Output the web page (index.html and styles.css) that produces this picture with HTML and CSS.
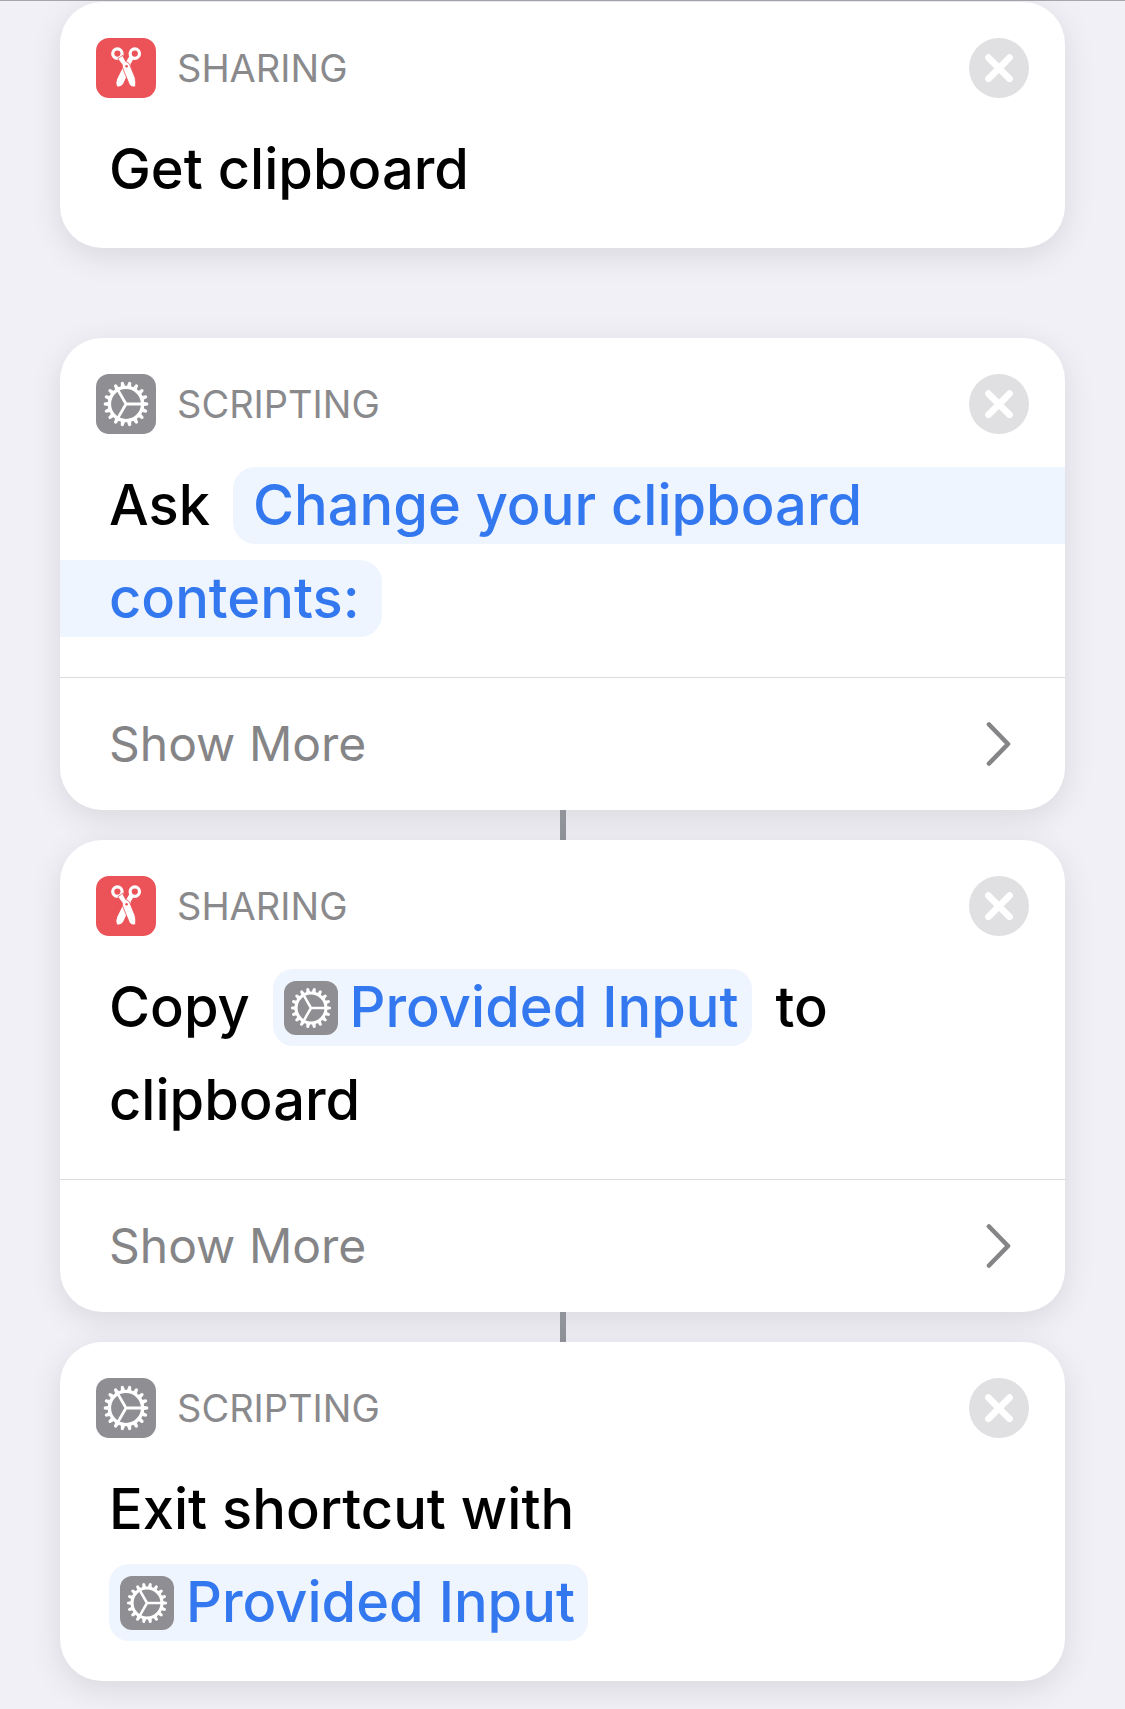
FILE: index.html
```html
<!DOCTYPE html>
<html lang="en">
<head>
<meta charset="utf-8">
<meta name="viewport" content="width=device-width, initial-scale=1">
<title>Shortcut editor</title>
<link rel="stylesheet" href="styles.css">
</head>
<body>
<svg class="sprite" width="0" height="0" aria-hidden="true">
  <symbol id="scissors" viewBox="0 0 60 60">
    <g fill="none" stroke="#fff" stroke-width="3.2">
      <circle cx="21.4" cy="15.6" r="4.7"/>
      <circle cx="38.8" cy="15.6" r="4.7"/>
    </g>
    <path fill="#fff" d="M33.6 17.8 L37.6 20.8 L34.8 25.6 L32.6 34 L27 46 Q24.8 49.2 21 48.2 Q19.6 45 21.2 41 L28.4 26.5z"/>
    <path fill="#fff" stroke="#eb5358" stroke-width=".8" d="M21.8 20.8 L26.6 17.4 L29.8 23.6 Q32.8 24.2 33.9 27 L39 39.6 Q40.2 44 39.5 48.6 Q35.4 49.8 33.4 46.6 L27 31 Q26.2 28.6 26.4 27z"/>
    <circle cx="30.6" cy="28.2" r="1.3" fill="#eb5358"/>
  </symbol>
  <symbol id="gear" viewBox="0 0 60 60">
    <defs><path id="tooth" d="M46.5 27.7 L51.6 28.5 Q53.4 30 51.6 31.5 L46.5 32.3z"/></defs>
    <g fill="#fff">
      <use href="#tooth"/>
      <use href="#tooth" transform="rotate(20 30 30)"/>
      <use href="#tooth" transform="rotate(40 30 30)"/>
      <use href="#tooth" transform="rotate(60 30 30)"/>
      <use href="#tooth" transform="rotate(80 30 30)"/>
      <use href="#tooth" transform="rotate(100 30 30)"/>
      <use href="#tooth" transform="rotate(120 30 30)"/>
      <use href="#tooth" transform="rotate(140 30 30)"/>
      <use href="#tooth" transform="rotate(160 30 30)"/>
      <use href="#tooth" transform="rotate(180 30 30)"/>
      <use href="#tooth" transform="rotate(200 30 30)"/>
      <use href="#tooth" transform="rotate(220 30 30)"/>
      <use href="#tooth" transform="rotate(240 30 30)"/>
      <use href="#tooth" transform="rotate(260 30 30)"/>
      <use href="#tooth" transform="rotate(280 30 30)"/>
      <use href="#tooth" transform="rotate(300 30 30)"/>
      <use href="#tooth" transform="rotate(320 30 30)"/>
      <use href="#tooth" transform="rotate(340 30 30)"/>
    </g>
    <g fill="none" stroke="#fff">
      <circle cx="30" cy="30" r="16.6" stroke-width="3.4"/>
      <path stroke-width="2.8" d="M30 30 H46 M30 30 L22 16.1 M30 30 L22 43.9"/>
    </g>
  </symbol>
  <symbol id="cross" viewBox="0 0 60 60">
    <path fill="none" stroke="#fff" stroke-width="6.6" stroke-linecap="round" d="M19.4 19.6 L40.6 40.8 M40.6 19.6 L19.4 40.8"/>
  </symbol>
  <symbol id="chevron" viewBox="0 0 26 46">
    <path fill="none" stroke="#858587" stroke-width="4.6" stroke-linecap="round" stroke-linejoin="round" d="M3 3.5 L22 23 L3 42.5"/>
  </symbol>
</svg>

<main class="editor">
  <section class="card card-detached">
    <header class="card-header">
      <svg class="app-icon sharing" aria-hidden="true"><use href="#scissors"/></svg>
      <span class="category">SHARING</span>
      <button class="close" type="button" aria-label="Remove action"><svg aria-hidden="true"><use href="#cross"/></svg></button>
    </header>
    <h2 class="action">Get clipboard</h2>
  </section>

  <section class="card">
    <header class="card-header">
      <svg class="app-icon scripting" aria-hidden="true"><use href="#gear"/></svg>
      <span class="category">SCRIPTING</span>
      <button class="close" type="button" aria-label="Remove action"><svg aria-hidden="true"><use href="#cross"/></svg></button>
    </header>
    <h2 class="action action-lines">Ask <a class="prompt" href="#prompt"><span class="prompt-start">Change your clipboard</span> <span class="prompt-end">contents:</span></a></h2>
    <button class="more" type="button">Show More <svg class="chevron" aria-hidden="true"><use href="#chevron"/></svg></button>
  </section>
  <div class="connector"></div>

  <section class="card">
    <header class="card-header">
      <svg class="app-icon sharing" aria-hidden="true"><use href="#scissors"/></svg>
      <span class="category">SHARING</span>
      <button class="close" type="button" aria-label="Remove action"><svg aria-hidden="true"><use href="#cross"/></svg></button>
    </header>
    <h2 class="action">Copy <a class="variable inset" href="#input"><svg class="chip-icon scripting" aria-hidden="true"><use href="#gear"/></svg><span class="variable-name">Provided Input</span></a> to clipboard</h2>
    <button class="more" type="button">Show More <svg class="chevron" aria-hidden="true"><use href="#chevron"/></svg></button>
  </section>
  <div class="connector"></div>

  <section class="card">
    <header class="card-header">
      <svg class="app-icon scripting" aria-hidden="true"><use href="#gear"/></svg>
      <span class="category">SCRIPTING</span>
      <button class="close" type="button" aria-label="Remove action"><svg aria-hidden="true"><use href="#cross"/></svg></button>
    </header>
    <h2 class="action">Exit shortcut with <a class="variable" href="#input"><svg class="chip-icon scripting" aria-hidden="true"><use href="#gear"/></svg><span class="variable-name">Provided Input</span></a></h2>
  </section>
</main>
</body>
</html>
```
FILE: styles.css
```css
* {
  box-sizing: border-box;
}

body {
  margin: 0;
  background: #f1f0f6;
  font-family: Inter, "Liberation Sans", sans-serif;
}

.sprite {
  display: block;
}

.editor {
  border-top: 1px solid #a7a6ac;
  padding: 1px 60px 27px;
}

.card {
  background: #fff;
  border-radius: 42px;
  box-shadow: 0 8px 32px rgba(0, 0, 0, 0.1);
  overflow: hidden;
}

.card-detached {
  margin-bottom: 90px;
}

.card-header {
  display: flex;
  align-items: center;
  gap: 21px;
  padding: 36px 36px 25px;
}

.app-icon {
  width: 60px;
  height: 60px;
  border-radius: 13px;
}

.sharing {
  background: #eb5358;
}

.scripting {
  background: #8e8e93;
}

.category {
  flex: 1;
  color: #8a8a8d;
  font-size: 38px;
  line-height: 60px;
}

.close {
  width: 60px;
  height: 60px;
  padding: 0;
  border: 0;
  border-radius: 50%;
  background: #e0e0e2;
}

.close svg {
  display: block;
  width: 60px;
  height: 60px;
}

.action {
  margin: 0;
  padding: 0 49px 32px;
  color: #000;
  font-size: 56px;
  font-weight: 500;
  line-height: 93px;
}

.action a {
  color: #3478f0;
  text-decoration: none;
}

/* The prompt runs off the right edge and continues from the left one. */
.action-lines {
  display: flex;
  flex-wrap: wrap;
  align-items: center;
  column-gap: 23px;
}

.prompt {
  display: contents;
}

.prompt-start,
.prompt-end {
  margin: 8px 0;
  background: #eff5fe;
  line-height: 77px;
}

.prompt-start {
  flex: 1;
  margin-right: -49px;
  padding-left: 20px;
  border-radius: 22px 0 0 22px;
  white-space: nowrap;
}

.prompt-end {
  margin-left: -49px;
  padding: 0 22px 0 49px;
  border-radius: 0 22px 22px 0;
}

.variable {
  display: inline-flex;
  align-items: center;
  gap: 12px;
  padding: 0 13px 0 11px;
  border-radius: 20px;
  background: #eff5fe;
  line-height: 77px;
}

.variable-name {
  align-self: baseline;
}

.inset {
  margin: 0 9px 0 8px;
}

.chip-icon {
  width: 54px;
  height: 54px;
  border-radius: 12px;
}

.more {
  display: flex;
  align-items: center;
  justify-content: space-between;
  width: 100%;
  padding: 0 53px 0 49px;
  border: 0;
  border-top: 1px solid #dcdcde;
  background: none;
  color: #858587;
  font: inherit;
  font-size: 48px;
  line-height: 132px;
  text-align: left;
}

.chevron {
  width: 26px;
  height: 46px;
}

.connector {
  width: 6px;
  height: 30px;
  margin: 0 auto;
  background: #92949c;
}
```
